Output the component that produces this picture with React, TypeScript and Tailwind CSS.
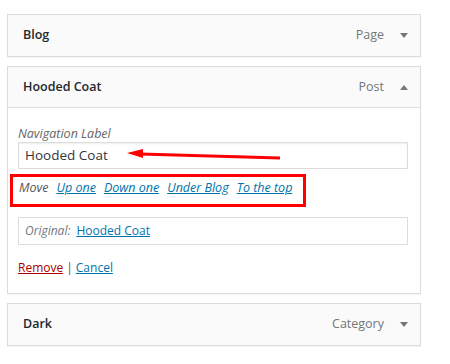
import React from "react";

const font = "font-['Open_Sans',_'Noto_Sans',_sans-serif]";

const Caret = ({ up }: { up?: boolean }) => (
  <svg width="8" height="5" viewBox="0 0 8 5" className="ml-[16px]">
    {up ? (
      <polygon points="0,5 8,5 4,0" fill="#72777c" />
    ) : (
      <polygon points="0,0 8,0 4,5" fill="#72777c" />
    )}
  </svg>
);

const Bar = ({
  title,
  type,
  up,
  open,
}: {
  title: string;
  type: string;
  up?: boolean;
  open?: boolean;
}) => (
  <div
    className={`flex items-center h-[41px] bg-[#fafafa] pl-[15px] pr-[12px] ${
      open ? "border-b border-[#dfdfdf]" : ""
    }`}
  >
    <span className="flex-1 text-[12.5px] font-semibold text-[#23282d]">{title}</span>
    <span className="text-[12.5px] text-[#72777c]">{type}</span>
    <Caret up={up} />
  </div>
);

const App = () => {
  return (
    <div className={`relative w-[450px] h-[364px] bg-white pl-[7px] pt-[14px] ${font}`}>
      <div className="w-[414px] flex flex-col gap-[9px]">
        <div className="border border-[#dcdcdc] shadow-[0_1px_1px_rgba(0,0,0,0.04)]">
          <Bar title="Blog" type="Page" />
        </div>

        <div className="border border-[#dcdcdc] shadow-[0_1px_1px_rgba(0,0,0,0.04)]">
          <Bar title="Hooded Coat" type="Post" up open />
          <div className="bg-white pl-[10px] pr-[12px] pt-[17px] pb-[16px]">
            <p className="h-[17px] leading-[17px] text-[12.5px] italic text-[#666]">
              Navigation Label
            </p>
            <div className="h-[27px] border border-[#dddddd] shadow-[inset_0_1px_2px_rgba(0,0,0,0.07)] flex items-center px-[6px] text-[13.5px] text-[#32373c]">
              Hooded Coat
            </div>
            <div className="mt-[10px] h-[18px] leading-[18px] flex gap-[8px] pl-[1px] text-[12.5px] italic">
              <span className="text-[#555]">Move</span>
              <span className="text-[#0073aa] underline">Up one</span>
              <span className="text-[#0073aa] underline">Down one</span>
              <span className="text-[#0073aa] underline">Under Blog</span>
              <span className="text-[#0073aa] underline">To the top</span>
            </div>
            <div className="mt-[20px] h-[28px] border border-[#dddddd] flex items-center px-[6px] gap-[6px] text-[12px]">
              <span className="italic text-[#72777c]">Original:</span>
              <span className="text-[#0073aa] underline">Hooded Coat</span>
            </div>
            <div className="mt-[14px] h-[18px] leading-[18px] text-[12px] text-[#555]">
              <span className="text-[#a00] underline">Remove</span>
              <span className="mx-[3px]">|</span>
              <span className="text-[#0073aa] underline">Cancel</span>
            </div>
          </div>
        </div>

        <div className="border border-[#dcdcdc] shadow-[0_1px_1px_rgba(0,0,0,0.04)]">
          <Bar title="Dark" type="Category" />
        </div>
      </div>

      {/* annotations */}
      <div className="absolute left-[10px] top-[174px] w-[296px] h-[33px] border-[3px] border-[#f00]" />
      <svg
        className="absolute left-0 top-0"
        width="450"
        height="364"
        viewBox="0 0 450 364"
      >
        <line x1="140" y1="154" x2="280" y2="158" stroke="#f00" strokeWidth="3" />
        <polygon points="127,153 143,149 143,158" fill="#f00" />
      </svg>
    </div>
  );
};

export default App;
